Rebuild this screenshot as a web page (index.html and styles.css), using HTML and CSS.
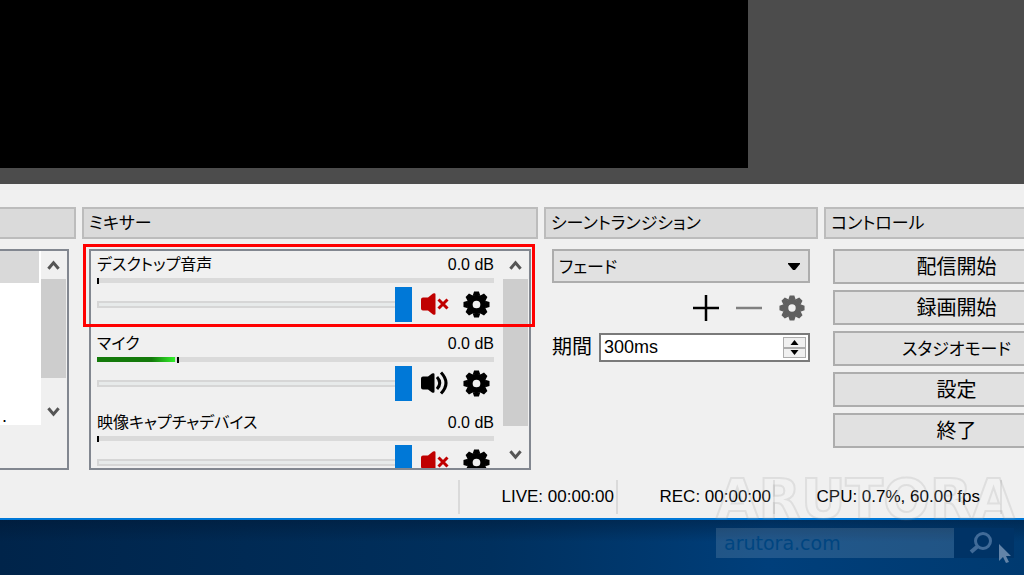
FILE: index.html
```
<!DOCTYPE html>
<html lang="ja">
<head>
<meta charset="utf-8">
<title>OBS</title>
<link rel="stylesheet" href="styles.css">
</head>
<body>
<svg class="defs" aria-hidden="true">
  <symbol id="gear" viewBox="-14 -14 28 28">
    <g fill="currentColor">
      <path fill-rule="evenodd" d="M0-10A10 10 0 1 1 0 10A10 10 0 1 1 0-10ZM0-4A4 4 0 1 0 0 4A4 4 0 1 0 0-4Z"/>
      <g id="teeth"><path d="M-4-9L-2.500-13.500H2.500L4-9ZM-4 9L-2.500 13.500H2.500L4 9Z"/></g>
      <use href="#teeth" transform="rotate(45)"/>
      <use href="#teeth" transform="rotate(90)"/>
      <use href="#teeth" transform="rotate(135)"/>
    </g>
  </symbol>
  <symbol id="muted" viewBox="0 0 28 24">
    <path fill="#c00000" d="M2 5.500H7L12 1.500Q14.500 .5 14.500 2.500V21.500Q14.500 23.500 12 22.500L7 18.500H2Q0 18.500 0 16.500V7.500Q0 5.500 2 5.500Z"/>
    <path stroke="#c00000" stroke-width="3" d="M17.500 7.500L26.500 16.500M26.500 7.500L17.500 16.500"/>
  </symbol>
  <symbol id="sound" viewBox="0 0 28 24">
    <path d="M2 5.500H7L11 2.500Q13.500 1.500 13.500 3.500V20.500Q13.500 22.500 11 21.500L7 18.500H2Q0 18.500 0 16.500V7.500Q0 5.500 2 5.500Z"/>
    <path fill="none" stroke="#000" stroke-width="3" d="M16 6Q21.500 12 16 18M20 1.500Q30 12 20 22.500"/>
  </symbol>
  <symbol id="up" viewBox="0 0 14 12"><path fill="none" stroke="#555" stroke-width="3.200" d="M1.500 10L7 3.500L12.500 10"/></symbol>
  <symbol id="down" viewBox="0 0 14 12"><path fill="none" stroke="#555" stroke-width="3.200" d="M1.500 2L7 8.500L12.500 2"/></symbol>
</svg>
<main class="window">
  <section class="preview"><div class="canvas"></div></section>
  <div class="docks">
    <section class="dock">
      <h2 class="title title-cut"></h2>
      <div class="frame sources">
        <div class="source-list"><div class="selected"></div><span class="source-item">.</span></div>
        <div class="scrollbar source-scroll">
          <button class="arrow" aria-label="上へ"><svg><use href="#up"/></svg></button>
          <div class="thumb"></div>
          <button class="arrow" aria-label="下へ"><svg><use href="#down"/></svg></button>
        </div>
      </div>
    </section>
    <section class="dock mixer">
      <h2 class="title">ミキサー</h2>
      <div class="frame mixer-frame">
        <div class="channels">
          <div class="channel">
            <div class="names"><label for="v1">デスクトップ音声</label><span>0.0 dB</span></div>
            <div class="meter"><i class="peak"></i></div>
            <div class="volume"><input id="v1" type="range" value="100"><button class="icon speaker" aria-label="ミュート解除"><svg><use href="#muted"/></svg></button><button class="icon gear" aria-label="設定"><svg><use href="#gear"/></svg></button></div>
          </div>
          <div class="channel">
            <div class="names"><label for="v2">マイク</label><span>0.0 dB</span></div>
            <div class="meter"><i class="level"></i><i class="peak"></i></div>
            <div class="volume"><input id="v2" type="range" value="100"><button class="icon speaker" aria-label="ミュート"><svg><use href="#sound"/></svg></button><button class="icon gear" aria-label="設定"><svg><use href="#gear"/></svg></button></div>
          </div>
          <div class="channel">
            <div class="names"><label for="v3">映像キャプチャデバイス</label><span>0.0 dB</span></div>
            <div class="meter"><i class="peak"></i></div>
            <div class="volume"><input id="v3" type="range" value="100"><button class="icon speaker" aria-label="ミュート解除"><svg><use href="#muted"/></svg></button><button class="icon gear" aria-label="設定"><svg><use href="#gear"/></svg></button></div>
          </div>
        </div>
        <div class="scrollbar mixer-scroll">
          <button class="arrow" aria-label="上へ"><svg><use href="#up"/></svg></button>
          <div class="thumb"></div>
          <button class="arrow" aria-label="下へ"><svg><use href="#down"/></svg></button>
        </div>
      </div>
      <div class="highlight"></div>
    </section>
    <section class="dock">
      <h2 class="title">シーントランジション</h2>
      <div class="transition">
        <div class="combo">
          <select aria-label="シーントランジション"><option>フェード</option></select>
          <svg class="caret" viewBox="0 0 12 8"><path d="M0 0H12V1L7 7H5L0 1Z"/></svg>
        </div>
        <div class="tools">
          <button class="icon" aria-label="追加"><svg viewBox="0 0 26 26"><path stroke="#000" stroke-width="2.500" d="M0 13H26M13 0V26"/></svg></button>
          <button class="icon" aria-label="削除"><svg viewBox="0 0 26 26"><path stroke="#808080" stroke-width="2.500" d="M0 13H26"/></svg></button>
          <button class="icon props" aria-label="プロパティ"><svg><use href="#gear"/></svg></button>
        </div>
        <div class="duration">
          <label for="ms">期間</label>
          <div class="spin">
            <input id="ms" type="text" value="300ms">
            <div class="steps">
              <button aria-label="増やす"><svg viewBox="0 0 8 5"><path d="M0 5L4 0L8 5Z"/></svg></button>
              <button aria-label="減らす"><svg viewBox="0 0 8 5"><path d="M0 0H8L4 5Z"/></svg></button>
            </div>
          </div>
        </div>
      </div>
    </section>
    <section class="dock">
      <h2 class="title">コントロール</h2>
      <div class="controls">
        <button>配信開始</button>
        <button>録画開始</button>
        <button class="kana">スタジオモード</button>
        <button>設定</button>
        <button>終了</button>
      </div>
    </section>
  </div>
  <footer class="status">
    <span class="live">LIVE: 00:00:00</span>
    <span class="rec">REC: 00:00:00</span>
    <span class="cpu">CPU: 0.7%, 60.00 fps</span>
  </footer>
</main>
<div class="desktop"></div>
<div class="watermark">
  <div class="brand">ARUTORA</div>
  <div class="search">
    <input type="text" value="arutora.com" aria-label="検索">
    <button aria-label="検索"><svg viewBox="0 0 60 30"><g fill="none" stroke="#416b98" stroke-width="3"><circle cx="29" cy="13" r="7.500"/><path stroke-width="4" d="M24 18L17 24"/></g><path fill="#6384a8" d="M45 16V33L49 29L52 35L55 34L52 28H57Z"/></svg></button>
  </div>
</div>
</body>
</html>
```
FILE: styles.css
```
* { box-sizing: border-box; }
body {
  margin: 0;
  position: relative;
  min-height: 100vh;
  display: flex;
  flex-direction: column;
  overflow: hidden;
  background: #003263;
  color: #000;
  font-family: "Liberation Sans", "Noto Sans CJK JP", sans-serif;
  font-size: 18px;
}
button, input, select { font: inherit; color: inherit; margin: 0; padding: 0; border: 0; background: none; border-radius: 0; }
svg { display: block; overflow: visible; }
.defs { position: absolute; width: 0; height: 0; }
.window { background: #f0f0f0; border-bottom: 2px solid #0078d7; }
.preview { height: 184px; background: #4c4c4c; }
.canvas { width: 73%; height: 168px; background: #000; }

.docks {
  display: grid;
  grid-template-columns: 76px 1fr 274px 265px;
  gap: 6px;
  margin-right: -65px;
  padding-top: 23px;
}
.dock { min-width: 0; }
.title {
  margin: 0 0 10px;
  height: 32px;
  padding-left: 5px;
  border: 2px solid #bcbcbc;
  background: #dadada;
  font-size: 17px;
  font-weight: 400;
  line-height: 30px;
  font-feature-settings: "palt";
}
.title-cut { border-left: 0; }
.frame { display: flex; height: 221px; border: 2px solid #828790; overflow: hidden; }

.sources { margin-right: 7px; border-left: 0; padding-right: 1px; }
.source-list { flex: 1; height: 174px; background: #fff; overflow: hidden; display: flex; flex-direction: column; justify-content: space-between; }
.selected { height: 32px; margin-right: 2px; background: #d9d9d9; }
.source-item { height: 18px; line-height: 18px; padding-left: 2px; }
.scrollbar { display: flex; flex-direction: column; width: 25px; background: #f0f0f0; }
.arrow { flex: none; height: 28px; display: grid; place-items: center; }
.arrow svg { width: 13px; height: 12px; }
.thumb { flex: none; background: #cdcdcd; }
.source-scroll .thumb { height: 99px; }
.source-scroll .arrow:last-child { height: 68px; }

.mixer { position: relative; }
.mixer-frame { margin: 0 7px; padding-right: 1px; }
.channels { flex: 1; padding: 3px 9px 0 6px; min-width: 0; }
.channel { height: 79px; }
.names { display: flex; justify-content: space-between; height: 24px; line-height: 22px; font-size: 16px; }
.names label { font-feature-settings: "palt"; }
.meter { display: flex; gap: 2px; height: 5px; background: #dadada; }
.level { width: 78px; background: linear-gradient(90deg, #147a0b 70%, #33f02c); }
.peak { width: 2px; height: 6px; background: #000; }
.volume { display: flex; align-items: center; height: 42px; }
.volume input { flex: 1; min-width: 0; height: 35px; appearance: none; }
.volume input::-webkit-slider-runnable-track { height: 7px; box-shadow: inset 0 0 0 2px #d6d6d6; background: #e7eaea; }
.volume input::-webkit-slider-thumb { appearance: none; width: 17px; height: 35px; margin-top: -14px; background: #0078d7; }
.icon { display: block; width: 26px; height: 26px; }
.icon svg { width: 100%; height: 100%; }
.speaker { width: 28px; height: 24px; margin-left: 9px; }
.gear { width: 27px; height: 27px; margin: 0 4px 0 14px; }
.mixer-scroll .thumb { height: 147px; }
.mixer-scroll .arrow:last-child { height: 58px; }
.highlight { position: absolute; top: 37px; left: 1px; right: 3px; height: 83px; border: 3px solid #f00; pointer-events: none; }

.transition { margin: 0 8px; }
.combo { position: relative; margin-top: 10px; }
.combo select { appearance: none; width: 100%; height: 34px; padding: 2px 0 0 5px; border: 2px solid #adadad; background: #e1e1e1; font-size: 17px; font-feature-settings: "palt"; }
.caret { position: absolute; right: 10px; top: 14px; width: 12px; height: 8px; pointer-events: none; }
.tools { display: flex; justify-content: flex-end; gap: 17px; height: 50px; align-items: center; padding-right: 5px; }
.tools .props { color: #606060; }
.duration { display: flex; align-items: center; justify-content: space-between; }
.duration label { font-size: 20px; line-height: 29px; }
.spin { display: flex; width: 211px; height: 29px; padding: 2px; border: 2px solid #7a7a7a; background: #fff; }
.spin input { flex: 1; min-width: 0; padding-left: 1px; outline: 0; }
.steps { display: flex; flex-direction: column; width: 23px; }
.steps button { flex: 1; display: grid; place-items: center; border: 1px solid #adadad; background: #f0f0f0; }
.steps svg { width: 9px; height: 5px; }

.controls { display: grid; gap: 6px; margin: 0 9px; }
.controls button { height: 35px; padding-top: 2px; border: 2px solid #adadad; background: #e1e1e1; font-size: 20px; line-height: 29px; }
.controls .kana { font-size: 17px; font-feature-settings: "palt"; }

.status { display: flex; justify-content: flex-end; height: 48px; padding: 10px 22px 4px 0; font-size: 17px; line-height: 34px; white-space: nowrap; }
.status span { border-right: 2px solid #dadada; text-align: right; padding-right: 2px; }
.status .live { width: 160px; border-left: 2px solid #dadada; }
.status .rec { width: 157px; }
.status .cpu { width: 227px; padding-right: 20px; }

.desktop { flex: 1; background: linear-gradient(180deg, rgba(0, 20, 45, .4), transparent 40%), linear-gradient(90deg, #00244a, #00305e 48%, #003f7b 75%, #003a70); }
.watermark { position: absolute; right: 10px; bottom: 17px; width: 298px; }
.brand { font-family: "DejaVu Sans", sans-serif; font-size: 55px; font-weight: 700; line-height: 58px; color: rgba(255, 255, 255, .12); -webkit-text-stroke: 2px rgba(128, 128, 128, .16); white-space: nowrap; }
.search { display: flex; height: 30px; }
.search input { flex: 1; min-width: 0; padding-left: 8px; background: rgba(255, 255, 255, .13); color: #004580; font-family: "DejaVu Sans", sans-serif; font-size: 19px; }
.search button { width: 60px; background: #003366; }
.search svg { width: 60px; height: 30px; }
```
